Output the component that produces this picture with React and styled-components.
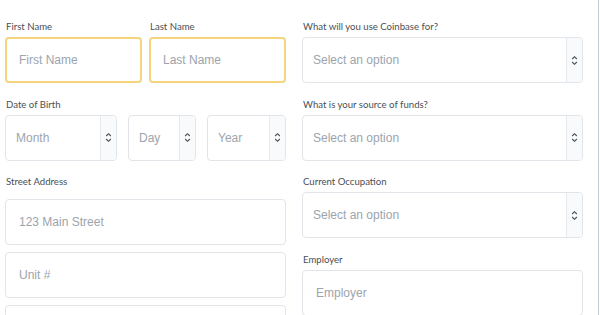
import React from 'react';
import styled, { createGlobalStyle } from 'styled-components';

const GlobalStyle = createGlobalStyle`
  html, body {
    margin: 0;
    padding: 0;
    background: #ffffff;
  }
  * {
    box-sizing: border-box;
  }
`;

const Page = styled.div`
  width: 599px;
  height: 315px;
  overflow: hidden;
  border-right: 1px solid #bfcddb;
  background: #ffffff;
`;

const Form = styled.form`
  display: grid;
  grid-template-columns: 281px 281px;
  column-gap: 16px;
  align-items: start;
  padding: 20px 0 0 5px;
`;

const Column = styled.div`
  display: flex;
  flex-direction: column;
  gap: 14.5px;
`;

const Field = styled.div`
  display: flex;
  flex-direction: column;
`;

const Label = styled.label`
  font-family: Lato, "Noto Sans", sans-serif;
  font-size: 9.6px;
  line-height: 14px;
  color: #4a4f55;
  margin-bottom: 3px;
  margin-left: 1px;
`;

const Stack = styled.div`
  display: flex;
  flex-direction: column;
  gap: 7px;
  padding-top: ${props => props.offset || 0}px;
`;

const TextInput = styled.input`
  height: 46px;
  width: 100%;
  border: ${props => props.focused ? '2px solid #f4d47c' : '1px solid #e1e5e9'};
  border-radius: 4px;
  padding: 0 ${props => props.focused ? 12 : 13}px;
  font-family: "Liberation Sans", Arial, sans-serif;
  font-size: 12px;
  color: #333;
  background: #fff;
  outline: none;

  &::placeholder {
    color: #9ca4ad;
  }
`;

const SelectBox = styled.div`
  display: flex;
  height: 46px;
  border: 1px solid #e1e5e9;
  border-radius: 4px;
  overflow: hidden;
  background: #fff;
`;

const NativeSelect = styled.select`
  flex: 1;
  min-width: 0;
  appearance: none;
  border: none;
  outline: none;
  background: transparent;
  padding: 0 0 0 10px;
  font-family: "Liberation Sans", Arial, sans-serif;
  font-size: 12px;
  color: #9ca4ad;
`;

const ArrowCell = styled.span`
  width: 16px;
  flex: none;
  display: flex;
  align-items: center;
  justify-content: center;
  border-left: 1px solid #e6eaee;
  background: #f8fafc;
  color: #464b51;
`;

const DateRow = styled.div`
  display: grid;
  grid-template-columns: 112px 68px 79px;
  column-gap: 11px;
`;

const NameRow = styled.div`
  display: grid;
  grid-template-columns: 137px 137px;
  column-gap: 7px;
`;

const UpDown = () => (
  <svg width="7" height="11" viewBox="0 0 7 11" fill="none">
    <path d="M1.2 4 L3.5 1.7 L5.8 4" stroke="currentColor" strokeWidth="1.1" />
    <path d="M1.2 7 L3.5 9.3 L5.8 7" stroke="currentColor" strokeWidth="1.1" />
  </svg>
);

const Select = ({ placeholder = 'Select an option' }) => (
  <SelectBox>
    <NativeSelect defaultValue="">
      <option value="" disabled>{placeholder}</option>
    </NativeSelect>
    <ArrowCell>
      <UpDown />
    </ArrowCell>
  </SelectBox>
);

export default function App() {
  return (
    <Page>
      <GlobalStyle />
      <Form onSubmit={e => e.preventDefault()}>
        <Column>
          <NameRow>
            <Field>
              <Label>First Name</Label>
              <TextInput focused placeholder="First Name" />
            </Field>
            <Field>
              <Label>Last Name</Label>
              <TextInput focused placeholder="Last Name" />
            </Field>
          </NameRow>
          <Field>
            <Label>Date of Birth</Label>
            <DateRow>
              <Select placeholder="Month" />
              <Select placeholder="Day" />
              <Select placeholder="Year" />
            </DateRow>
          </Field>
          <Field>
            <Label>Street Address</Label>
            <Stack offset={7}>
              <TextInput placeholder="123 Main Street" />
              <TextInput placeholder="Unit #" />
              <TextInput placeholder="City" />
            </Stack>
          </Field>
        </Column>
        <Column>
          <Field>
            <Label>What will you use Coinbase for?</Label>
            <Select />
          </Field>
          <Field>
            <Label>What is your source of funds?</Label>
            <Select />
          </Field>
          <Field>
            <Label>Current Occupation</Label>
            <Select />
          </Field>
          <Field>
            <Label>Employer</Label>
            <TextInput placeholder="Employer" />
          </Field>
        </Column>
      </Form>
    </Page>
  );
}
